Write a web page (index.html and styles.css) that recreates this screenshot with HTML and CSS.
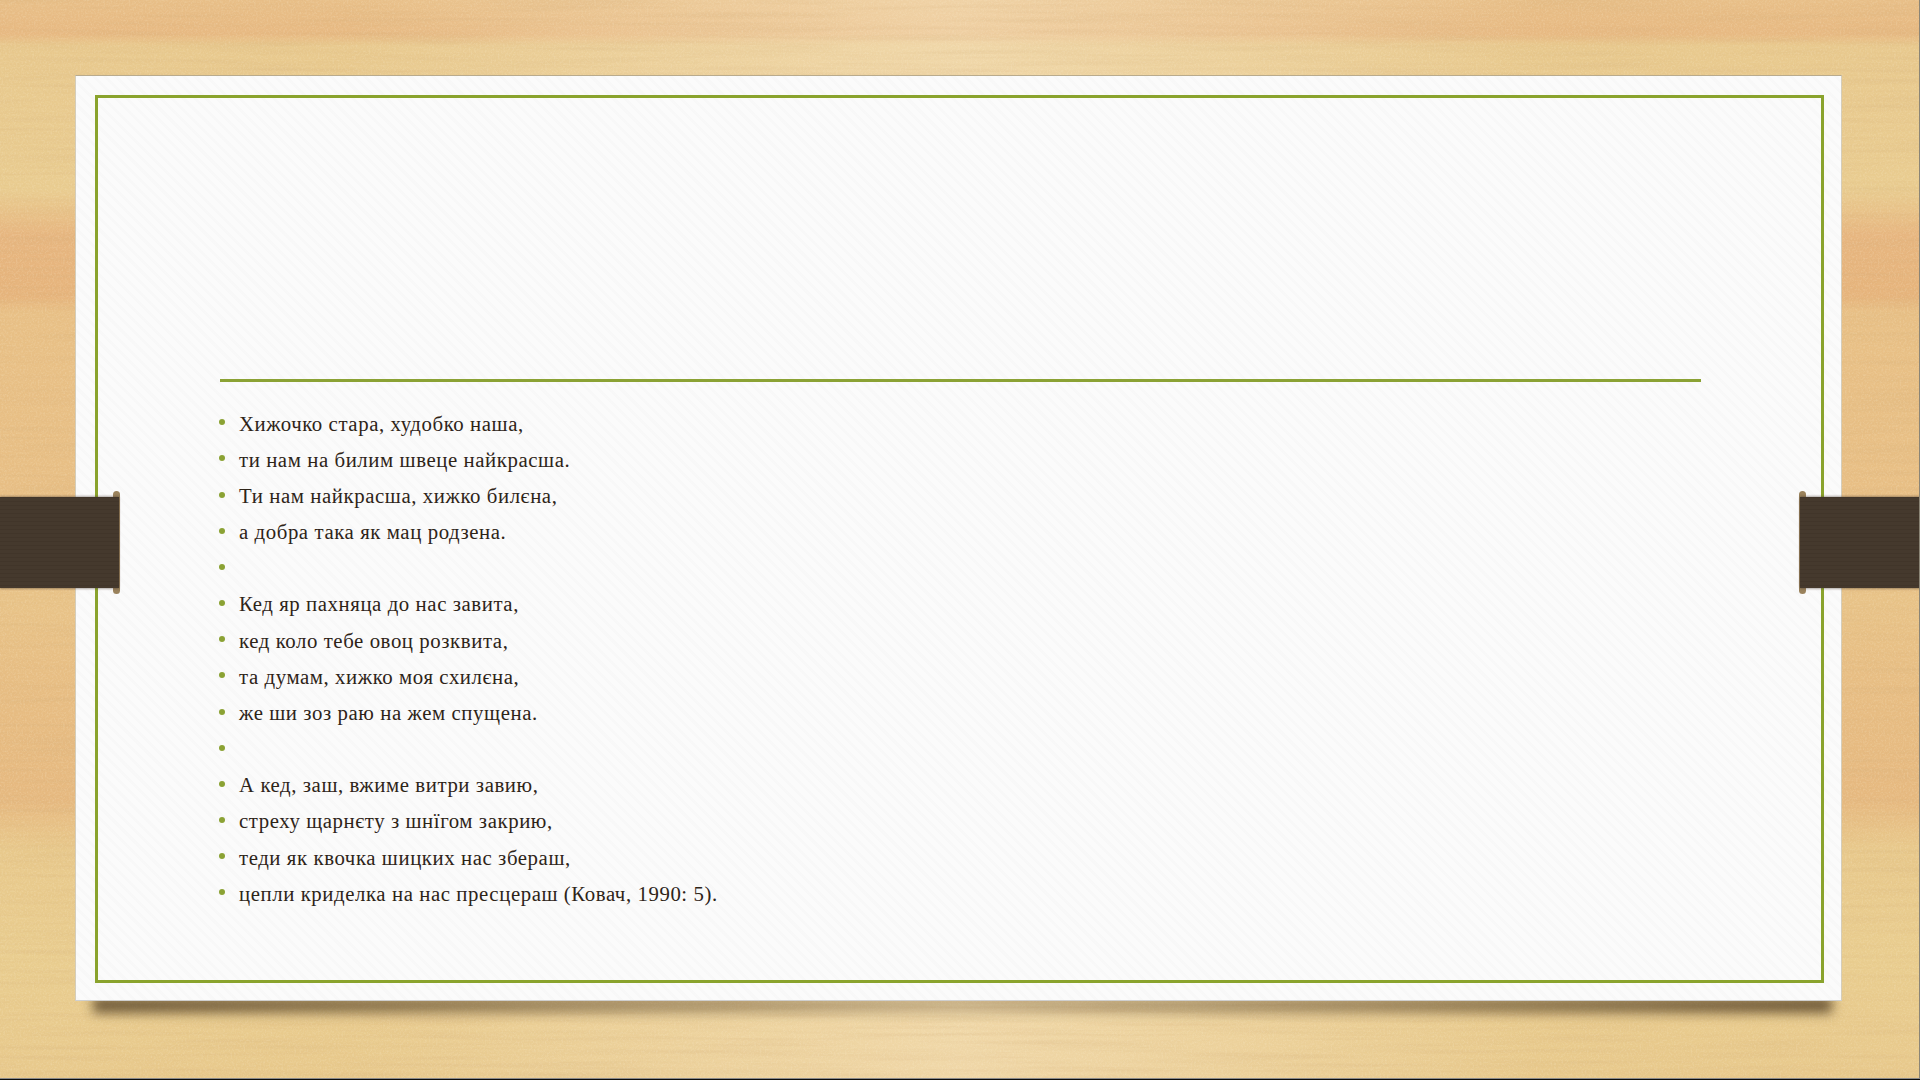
FILE: index.html
```html
<!DOCTYPE html>
<html lang="uk">
<head>
<meta charset="utf-8">
<title>Хижочко стара</title>
<link rel="stylesheet" href="styles.css">
</head>
<body>
<main class="stage">
  <svg class="grain" width="1920" height="1080" aria-hidden="true">
    <filter id="wood" x="0" y="0" width="100%" height="100%">
      <feTurbulence type="fractalNoise" baseFrequency="0.006 0.22" numOctaves="3" seed="4"/>
      <feColorMatrix type="matrix" values="0 0 0 0 0.62  0 0 0 0 0.40  0 0 0 0 0.18  0.9 0 0 0 -0.38"/>
    </filter>
    <filter id="speck" x="0" y="0" width="100%" height="100%">
      <feTurbulence type="fractalNoise" baseFrequency="0.55" numOctaves="2" seed="9"/>
      <feColorMatrix type="matrix" values="0 0 0 0 1  0 0 0 0 0.93  0 0 0 0 0.75  1.4 0 0 0 -0.6"/>
    </filter>
    <rect class="grain-wood" width="1920" height="1080"/>
    <rect class="grain-speck" width="1920" height="1080"/>
  </svg>
  <div class="sheet">
    <section class="paper">
      <div class="frame">
        <div class="title-space"></div>
        <hr class="rule">
        <ul class="verse">
          <li>Хижочко стара, худобко наша,</li>
          <li>ти нам на билим швеце найкрасша.</li>
          <li>Ти нам найкрасша, хижко билєна,</li>
          <li>а добра така як мац родзена.</li>
          <li></li>
          <li>Кед яр пахняца до нас завита,</li>
          <li>кед коло тебе овоц розквита,</li>
          <li>та думам, хижко моя схилєна,</li>
          <li>же ши зоз раю на жем спущена.</li>
          <li></li>
          <li>А кед, заш, вжиме витри завию,</li>
          <li>стреху щарнєту з шнїгом закрию,</li>
          <li>теди як квочка шицких нас збераш,</li>
          <li>цепли криделка на нас пресцераш (Ковач, 1990: 5).</li>
        </ul>
      </div>
    </section>
  </div>
  <div class="strap strap-left"></div>
  <div class="strap strap-right"></div>
</main>
</body>
</html>
```
FILE: styles.css
```css
* { box-sizing: border-box; }
html, body { margin: 0; height: 100%; overflow: hidden; background: #e8c88e; }
.stage {
  position: relative;
  width: 1920px;
  height: 1080px;
  padding: 75px 78px 79px 75px;
  background:
    linear-gradient(90deg, rgba(246,226,190,0) 18%, rgba(246,226,190,.55) 50%, rgba(246,226,190,0) 80%),
    linear-gradient(180deg,
      #e8bf88 0, #e7b982 34px, #e8c98e 46px, #e9cc90 190px,
      #e7b680 236px, #e6b47c 296px, #e8c086 312px, #e8bf85 490px,
      #e8c388 600px, #e7bd83 690px, #e6b980 800px, #e8c98c 850px,
      #e9cd8f 960px, #e8c98c 1080px);
}
.stage::before {
  content: "";
  position: absolute;
  right: 0;
  top: 0;
  bottom: 0;
  width: 1px;
  z-index: 2;
  background: #8b8576;
}
.stage::after {
  content: "";
  position: absolute;
  left: 0;
  right: 0;
  bottom: 0;
  height: 2px;
  z-index: 2;
  background: linear-gradient(180deg, #8a8a8a 50%, #0c0c0c 50%);
}
.grain { position: absolute; left: 0; top: 0; }
.grain-wood { filter: url(#wood); opacity: .45; }
.grain-speck { filter: url(#speck); opacity: .3; }
.sheet {
  position: relative;
  height: 926px;
}
.sheet::before {
  content: "";
  position: absolute;
  left: 18px;
  right: 10px;
  bottom: -12px;
  height: 16px;
  background: linear-gradient(90deg, rgba(62,44,22,.72), rgba(110,90,60,.32) 50%, rgba(62,44,22,.72));
  filter: blur(6px);
}
.paper {
  position: relative;
  height: 100%;
  padding: 19px 17px 17px 19px;
  border: 1px solid #d4cdbb;
  border-top-color: #b9ab8d;
  border-bottom-color: #cfcfcf;
  background:
    repeating-linear-gradient(45deg, rgba(238,238,238,.22) 0 3px, rgba(255,255,255,0) 3px 8px),
    #fbfbfb;
}
.frame {
  height: 100%;
  padding: 0 120px 0 122px;
  border: 3px solid #8aa32d;
}
.title-space { height: 281px; }
.rule {
  height: 3px;
  margin: 0;
  border: 0;
  background: #8ba234;
}
.verse {
  margin: 23.7px 0 0;
  padding: 0;
  list-style: none;
  font: 20.8px/36.17px "Liberation Serif", "Times New Roman", serif;
  letter-spacing: .58px;
  color: #2e2418;
}
.verse li {
  display: flex;
  align-items: center;
  gap: 14px;
  height: 36.17px;
}
.verse li::before {
  content: "";
  flex: none;
  width: 6px;
  height: 6px;
  margin: -3px 0 0 -1px;
  border-radius: 50%;
  background: #8ba234;
}
.strap {
  position: absolute;
  top: 497px;
  height: 91px;
  z-index: 1;
}
.strap::before {
  content: "";
  position: absolute;
  top: -6px;
  bottom: -6px;
  width: 7px;
  border-radius: 4px;
  background: #9a825c;
  filter: blur(.4px);
}
.strap::after {
  content: "";
  position: absolute;
  left: 0;
  right: 0;
  top: 0;
  bottom: 0;
  background:
    repeating-linear-gradient(180deg, rgba(0,0,0,.035) 0 1px, rgba(255,255,255,.012) 1px 4px),
    #43372b;
  box-shadow: 0 -1px 2px rgba(70,60,50,.4), 0 1px 2px rgba(70,60,50,.4);
}
.strap-left { left: 0; width: 119px; }
.strap-left::before { right: -1px; }
.strap-right { right: 0; width: 120px; }
.strap-right::before { left: -1px; }
```
